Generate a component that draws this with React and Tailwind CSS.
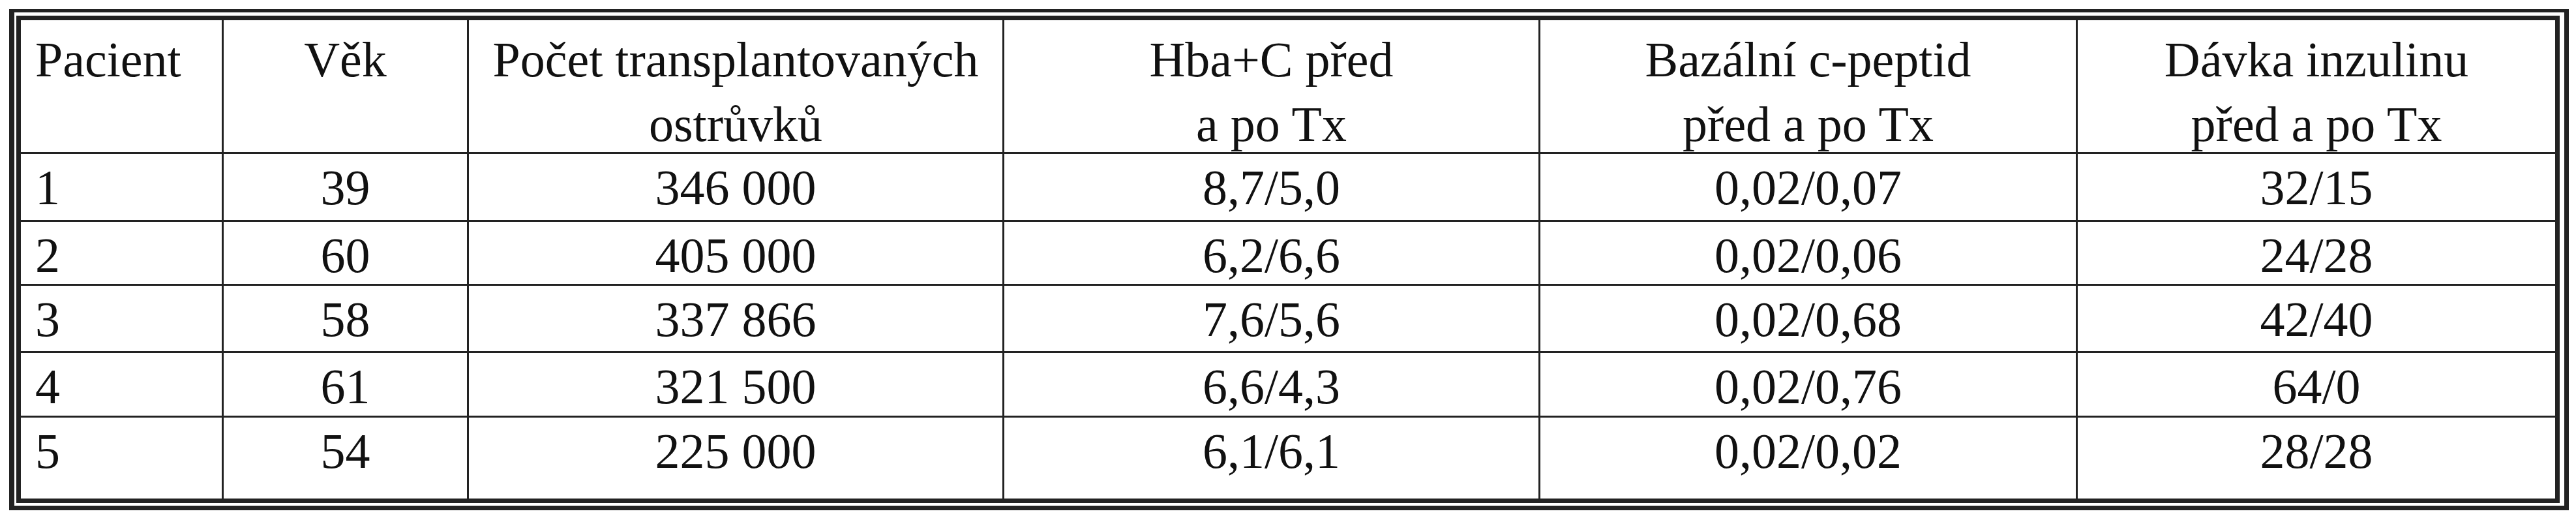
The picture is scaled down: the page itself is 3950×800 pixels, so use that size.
const COLS = [
  { w: "w-[308px]", align: "text-left pl-[22px]" },
  { w: "w-[376px] border-l-[3px]", align: "text-center" },
  { w: "w-[821px] border-l-[3px]", align: "text-center" },
  { w: "w-[822px] border-l-[3px]", align: "text-center" },
  { w: "w-[824px] border-l-[3px]", align: "text-center" },
  { w: "w-[735px] border-l-[3px]", align: "text-center" },
];

const HEAD = [
  ["Pacient"],
  ["Věk"],
  ["Počet transplantovaných", "ostrůvků"],
  ["Hba+C před", "a po Tx"],
  ["Bazální c-peptid", "před a po Tx"],
  ["Dávka inzulinu", "před a po Tx"],
];

// row heights include the 3px top rule
const ROWS = [
  { h: "h-[104px]", cells: ["1", "39", "346 000", "8,7/5,0", "0,02/0,07", "32/15"] },
  { h: "h-[98px]", cells: ["2", "60", "405 000", "6,2/6,6", "0,02/0,06", "24/28"] },
  { h: "h-[103px]", cells: ["3", "58", "337 866", "7,6/5,6", "0,02/0,68", "42/40"] },
  { h: "h-[99px]", cells: ["4", "61", "321 500", "6,6/4,3", "0,02/0,76", "64/0"] },
  { h: "h-[127px]", cells: ["5", "54", "225 000", "6,1/6,1", "0,02/0,02", "28/28"] },
];

export default function App() {
  return (
    <div
      className="w-[3950px] h-[800px] bg-white pt-[14px] pl-[14px] text-[#111] text-[76px]"
      style={{ fontFamily: '"Liberation Serif", "Times New Roman", serif' }}
    >
      <div className="w-[3925px] border-[#222] border-l-[8px] border-r-[7px] border-t-[5px] border-b-[7px] pl-[3px] pr-[7px] pt-[5px] pb-[4px]">
        <div className="border-[7px] border-[#222]">
          {/* header */}
          <div className="flex h-[202px]">
            {HEAD.map((lines, i) => (
              <div
                key={i}
                className={`${COLS[i].w} ${COLS[i].align} border-[#222] shrink-0 pt-[11px] leading-[99px] whitespace-nowrap`}
              >
                {lines.map((l, j) => (
                  <div key={j}>{l}</div>
                ))}
              </div>
            ))}
          </div>
          {/* body */}
          {ROWS.map((row, r) => (
            <div key={r} className={`flex ${row.h} border-t-[3px] border-[#222]`}>
              {row.cells.map((c, i) => (
                <div
                  key={i}
                  className={`${COLS[i].w} ${COLS[i].align} border-[#222] shrink-0 pt-[6px] leading-[90px] whitespace-nowrap`}
                >
                  {c}
                </div>
              ))}
            </div>
          ))}
        </div>
      </div>
    </div>
  );
}
